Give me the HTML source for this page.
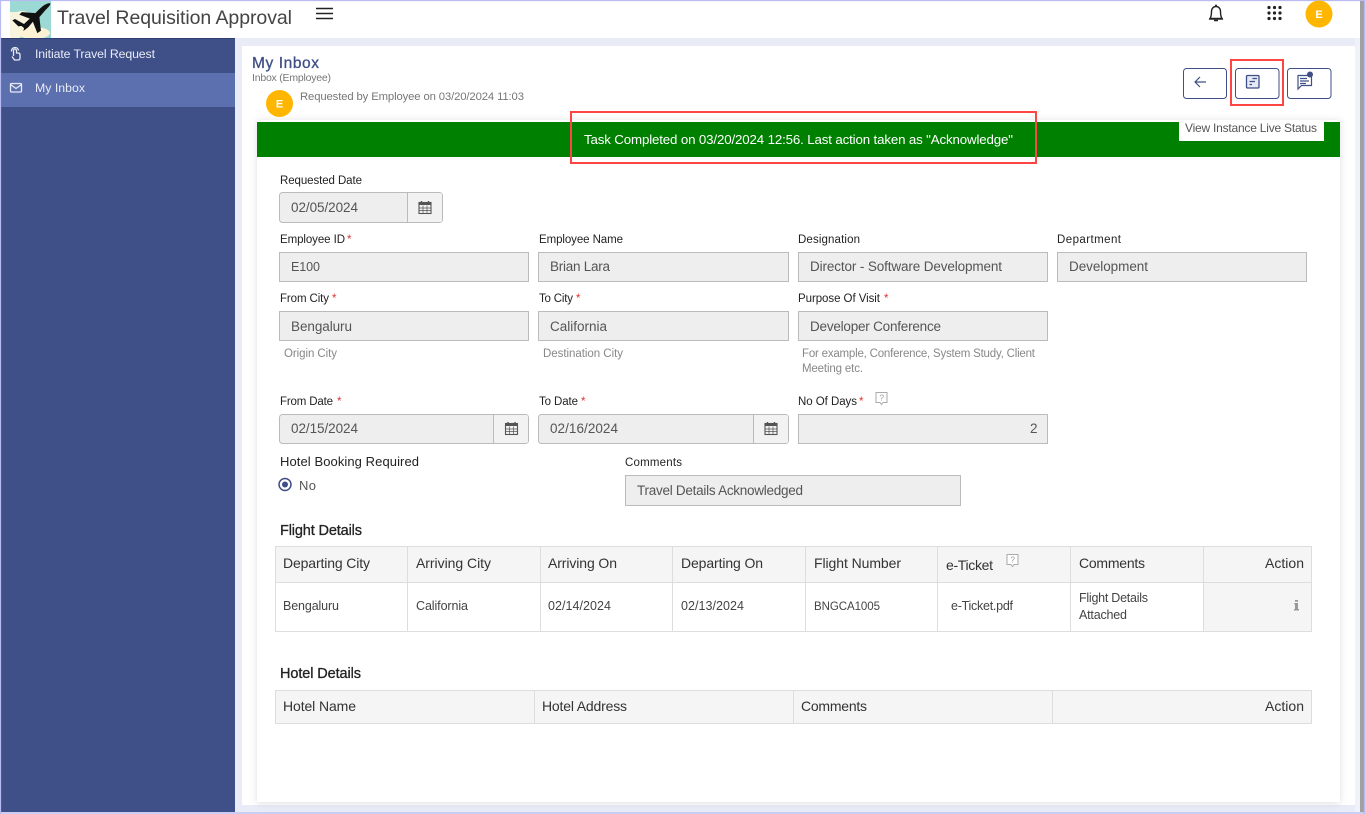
<!DOCTYPE html>
<html lang="en"><head><meta charset="utf-8"><title>Travel Requisition Approval</title>
<style>
html,body{margin:0;padding:0;width:1365px;height:814px;overflow:hidden;background:#fff}
svg{display:block}
text{font-family:"Liberation Sans",sans-serif;font-size:12px;fill:#444}
.lb text,text.lb{font-size:11.5px;fill:#222}
.st{font-size:11.5px;fill:#d33}
.v text{font-size:13.5px;fill:#555}
.h text{font-size:11.5px;fill:#888}
.th text{font-size:14px;fill:#333}
.td text{font-size:12.5px;fill:#444}
.f{fill:#eee;stroke:#bbb}
.ln{stroke:#ddd;fill:none}
.ic{fill:none;stroke:#3f4f87;stroke-width:1.2}
.sec{font-size:14.5px;fill:#222;stroke:#222;stroke-width:.3}
</style></head><body>
<svg width="1365" height="814" viewBox="0 0 1365 814" xmlns="http://www.w3.org/2000/svg">
<defs>
<filter id="sh" x="-3%" y="-3%" width="106%" height="106%"><feDropShadow dx="0" dy="1" stdDeviation="4" flood-color="#000" flood-opacity=".13"/></filter>
<clipPath id="logoclip"><rect x="10" y="1" width="41" height="37"/></clipPath>
<g id="cal"><rect x="-6" y="-5" width="12" height="11" fill="none" stroke="#555" stroke-width="1.1"/><path d="M-6-2.500H6V-5H-6Z" fill="#555"/><path d="M-3.500-6.500V-4M3.500-6.500V-4" stroke="#555" stroke-width="1.400"/><path d="M-2-2V6M2-2V6M-6 0.500H6M-6 3H6" stroke="#555" stroke-width=".7"/></g>
<g id="q"><path d="M-5.500-6H5.500V4H1.500L0 6-1.500 4H-5.500Z" fill="#fff" stroke="#aaa"/><text x="-2" y="2" style="font-size:8px;fill:#999">?</text></g>
</defs>

<!-- page background -->
<rect width="1365" height="814" fill="#e9ecf6"/>
<rect x="0" y="0" width="1365" height="38" fill="#fff"/>
<rect x="242" y="46" width="1113" height="759" fill="#fff"/>
<rect x="1355" y="38" width="5" height="774" fill="#f0f2f9"/>
<rect x="1360" y="1" width="4" height="811" fill="#a0a0a0"/>
<rect x="1" y="38" width="234" height="774" fill="#3f4f87"/>
<rect x="1" y="38" width="234" height="1" fill="#2f3d70"/>
<rect x="1" y="73" width="234" height="34" fill="#5c6fae"/>
<path d="M0 .5H1365M.5 0V814M0 813H1365M1364.500 0V814" stroke="#b7bbf2" fill="none" stroke-width="1.200"/>

<!-- logo -->
<g clip-path="url(#logoclip)">
<rect x="10" y="1" width="41" height="37" fill="#9cd9d4"/>
<ellipse cx="22" cy="24" rx="13" ry="13" fill="#f7f3dc"/>
<ellipse cx="34" cy="33" rx="16" ry="6" fill="#fdf3d4"/>
<rect x="10" y="12" width="10" height="26" fill="#f7f3dc"/>
<path d="M50 3.500C47 3.500 43 6 39 10L35.500 13.500 22 12.500 20 14.500 30.500 18.500 24 24.500 15 19.500 13 20.500 18.500 26 21.500 25.500 24.500 28 24 30 28 27 33 21 37.500 32.500 40.500 30.500 39 17 45 10C48 7 50 5.500 50 3.500Z" fill="#111" stroke="#111" stroke-width=".8"/>
</g>
<text x="57" y="24" textLength="235" style="font-size:19.500px;fill:#444">Travel Requisition Approval</text>
<path d="M316 8.500H333M316 13.500H333M316 18.500H333" stroke="#222" stroke-width="1.500"/>

<!-- header icons -->
<path d="M1210 18.500C1211 17 1211.500 15 1211.500 11.500C1211.500 8.500 1213.500 6.500 1216 6.500S1220.500 8.500 1220.500 11.500C1220.500 15 1221 17 1222 18.500ZM1209 19H1223" fill="none" stroke="#222" stroke-width="1.400"/><path d="M1214 20.500H1218" stroke="#222" stroke-width="1.500"/><circle cx="1216" cy="5.500" r="1" fill="#222"/>
<g fill="#222"><circle cx="1269" cy="7.500" r="1.600"/><circle cx="1274.500" cy="7.500" r="1.600"/><circle cx="1280" cy="7.500" r="1.600"/><circle cx="1269" cy="13" r="1.600"/><circle cx="1274.500" cy="13" r="1.600"/><circle cx="1280" cy="13" r="1.600"/><circle cx="1269" cy="18.500" r="1.600"/><circle cx="1274.500" cy="18.500" r="1.600"/><circle cx="1280" cy="18.500" r="1.600"/></g>
<circle cx="1319" cy="14" r="13.500" fill="#ffb600"/><text x="1319" y="18" text-anchor="middle" style="font-size:11px;font-weight:bold;fill:#fff">E</text>

<!-- sidebar -->
<g fill="none" stroke="#e8ebf6" stroke-width="1.300"><path d="M13.500 56V50.500A1.500 1.500 0 0 1 16.500 50.500V53H18.500C19.500 53 20 54 20 55V58C20 59.500 19 60 18 60H14.500L12 56.500"/><path d="M11.500 51.500A3.500 3.500 0 0 1 15 47.500A3.500 3.500 0 0 1 18.500 50.500"/></g>
<rect x="10.500" y="83.500" width="11" height="8.500" rx="1" fill="none" stroke="#e8ebf6" stroke-width="1.300"/><path d="M10.500 84.500L16 88.500 21.500 84.500" fill="none" stroke="#e8ebf6" stroke-width="1.200"/>
<text x="35" y="58" textLength="120" style="font-size:12.300px;fill:#e8ebf6">Initiate Travel Request</text>
<text x="35" y="92" textLength="50" style="font-size:12.300px;fill:#e8ebf6">My Inbox</text>

<!-- panel -->
<rect x="257" y="120" width="1083" height="682" fill="#fff" filter="url(#sh)"/>
<text x="252" y="68" textLength="67" style="font-size:15.500px;fill:#3f4f87;stroke:#3f4f87;stroke-width:.3">My Inbox</text>
<text x="252" y="81" textLength="79" style="font-size:10.500px;fill:#777">Inbox (Employee)</text>
<circle cx="279.500" cy="103.500" r="13.500" fill="#ffb600"/><text x="279.500" y="107.500" text-anchor="middle" style="font-size:11px;font-weight:bold;fill:#fff">E</text>
<text x="300" y="100" textLength="224" style="font-size:11.300px;fill:#777">Requested by Employee on 03/20/2024 11:03</text>

<!-- top buttons -->
<g fill="#fff" stroke="#3f4f87" stroke-width="1"><rect x="1183.500" y="68.500" width="43" height="30" rx="3"/><rect x="1235.500" y="68.500" width="43.500" height="30" rx="3"/><rect x="1287.500" y="68.500" width="43.500" height="30" rx="3"/></g>
<path d="M1206 82H1195.500M1200 77L1195 82 1200 87" class="ic"/>
<rect x="1246.500" y="75.500" width="12.500" height="12.500" rx="1" fill="#e6eaf6" stroke="#3f4f87" stroke-width="1.300"/><path d="M1252.500 78.500H1257M1249.500 81.500H1255M1249.500 84.500H1252" class="ic"/>
<path d="M1297.500 75.500H1311.500V85.500H1301.500L1298 89V75.500Z" class="ic"/><path d="M1300 78.500H1307M1300 81H1309M1300 83.500H1306" class="ic"/><circle cx="1310" cy="74.500" r="3" fill="#3f4f87"/>
<rect x="1231" y="60" width="52" height="45" fill="none" stroke="#f44" stroke-width="2"/>

<!-- banner -->
<rect x="257" y="122" width="1083" height="35" fill="#008000"/>
<text x="584" y="144" textLength="429" style="font-size:13.300px;fill:#fff">Task Completed on 03/20/2024 12:56. Last action taken as "Acknowledge"</text>
<rect x="571" y="112" width="465" height="51" fill="none" stroke="#f44" stroke-width="2"/>
<rect x="1179" y="122" width="145" height="19" fill="#fff"/>
<text x="1185" y="132" textLength="132" style="font-size:12px;fill:#555">View Instance Live Status</text>

<!-- form boxes -->
<g class="f">
<rect x="279.500" y="192.500" width="163" height="30" rx="3"/>
<rect x="279.500" y="252.500" width="249" height="29"/><rect x="538.500" y="252.500" width="250" height="29"/><rect x="798.500" y="252.500" width="249" height="29"/><rect x="1057.500" y="252.500" width="249" height="29"/>
<rect x="279.500" y="311.500" width="249" height="29"/><rect x="538.500" y="311.500" width="250" height="29"/><rect x="798.500" y="311.500" width="249" height="29"/>
<rect x="279.500" y="414.500" width="249" height="29" rx="3"/><rect x="538.500" y="414.500" width="250" height="29" rx="3"/><rect x="798.500" y="414.500" width="249" height="29"/>
<rect x="625.500" y="475.500" width="335" height="30"/>
</g>
<path d="M407.500 193V222M493.500 415V443M753.500 415V443" stroke="#bbb"/>
<rect x="408" y="193" width="34" height="29" rx="2" fill="#f2f2f2"/><rect x="494" y="415" width="34" height="28" rx="2" fill="#f2f2f2"/><rect x="754" y="415" width="34" height="28" rx="2" fill="#f2f2f2"/>
<use href="#cal" x="425" y="207.500"/><use href="#cal" x="511.500" y="428.500"/><use href="#cal" x="771" y="428.500"/>

<!-- labels -->
<g class="lb">
<text x="280" y="184" textLength="82">Requested Date</text>
<text x="280" y="243" textLength="65">Employee ID</text><text x="539" y="243" textLength="84">Employee Name</text><text x="798" y="243" textLength="62">Designation</text><text x="1057" y="243" textLength="64">Department</text>
<text x="280" y="302" textLength="49">From City</text><text x="539" y="302" textLength="34">To City</text><text x="798" y="302" textLength="82">Purpose Of Visit</text>
<text x="280" y="405" textLength="53">From Date</text><text x="539" y="405" textLength="39">To Date</text><text x="798" y="405" textLength="59">No Of Days</text>
<text x="625" y="466" textLength="57">Comments</text>
</g>
<text class="st" x="347" y="243">*</text><text class="st" x="332" y="302">*</text><text class="st" x="576" y="302">*</text><text class="st" x="884" y="302">*</text><text class="st" x="337" y="405">*</text><text class="st" x="581" y="405">*</text><text class="st" x="859" y="405">*</text>
<use href="#q" x="881.500" y="398.500"/>

<!-- values -->
<g class="v">
<text x="291" y="212" textLength="67">02/05/2024</text>
<text x="291" y="271" textLength="29" style="font-size:12.500px">E100</text><text x="550" y="271" textLength="60">Brian Lara</text><text x="810" y="271" textLength="192">Director - Software Development</text><text x="1069" y="271" textLength="79">Development</text>
<text x="291" y="331" textLength="61">Bengaluru</text><text x="550" y="331" textLength="57">California</text><text x="810" y="331" textLength="131">Developer Conference</text>
<text x="291" y="433" textLength="67">02/15/2024</text><text x="550" y="433" textLength="68">02/16/2024</text><text x="1030" y="433">2</text>
<text x="637" y="495" textLength="166">Travel Details Acknowledged</text>
</g>
<g class="h">
<text x="284" y="357" textLength="53">Origin City</text><text x="543" y="357" textLength="80">Destination City</text>
<text x="802" y="357" textLength="233">For example, Conference, System Study, Client</text><text x="802" y="372" textLength="61">Meeting etc.</text>
</g>

<!-- radio -->
<text x="280" y="466" textLength="139" style="font-size:13px;fill:#222">Hotel Booking Required</text>
<circle cx="285" cy="484.500" r="6" fill="#fff" stroke="#3f4f87" stroke-width="1.500"/><circle cx="285" cy="484.500" r="3" fill="#3f4f87"/>
<text x="299" y="490" textLength="17" style="font-size:13px;fill:#555">No</text>

<!-- flight table -->
<text class="sec" x="280" y="535" textLength="82">Flight Details</text>
<rect x="275.500" y="546.500" width="1036" height="36" fill="#f5f5f5"/>
<rect x="1203.500" y="582.500" width="108" height="49" fill="#f5f5f5"/>
<path class="ln" d="M275.500 546.500H1311.500V631.500H275.500ZM275.500 582.500H1311.500M407.500 546.500V631.500M540.500 546.500V631.500M672.500 546.500V631.500M805.500 546.500V631.500M937.500 546.500V631.500M1070.500 546.500V631.500M1203.500 546.500V631.500"/>
<g class="th">
<text x="283" y="568" textLength="87">Departing City</text><text x="416" y="568" textLength="75">Arriving City</text><text x="548" y="568" textLength="69">Arriving On</text><text x="681" y="568" textLength="82">Departing On</text><text x="814" y="568" textLength="87">Flight Number</text><text x="946" y="570" textLength="47">e-Ticket</text><text x="1079" y="568" textLength="66">Comments</text><text x="1265" y="568" textLength="39">Action</text>
</g>
<use href="#q" x="1012.500" y="560.500"/>
<g class="td">
<text x="283" y="610" textLength="56">Bengaluru</text><text x="416" y="610" textLength="52">California</text><text x="548" y="610" textLength="63">02/14/2024</text><text x="681" y="610" textLength="63">02/13/2024</text><text x="814" y="610" textLength="66" style="font-size:11.500px">BNGCA1005</text><text x="951" y="610" textLength="62">e-Ticket.pdf</text><text x="1079" y="602" textLength="69">Flight Details</text><text x="1079" y="619" textLength="48">Attached</text>
</g>
<path d="M1295 600H1298V601.700H1295ZM1294.300 603H1298V609H1299V610.500H1294V609H1295V604.500H1294.300Z" fill="#999"/>

<!-- hotel table -->
<text class="sec" x="280" y="678" textLength="81">Hotel Details</text>
<rect x="275.500" y="690.500" width="1036" height="33" fill="#f5f5f5"/>
<path class="ln" d="M275.500 690.500H1311.500V723.500H275.500ZM534.500 690.500V723.500M793.500 690.500V723.500M1052.500 690.500V723.500"/>
<g class="th">
<text x="283" y="711" textLength="73">Hotel Name</text><text x="542" y="711" textLength="85">Hotel Address</text><text x="801" y="711" textLength="66">Comments</text><text x="1265" y="711" textLength="39">Action</text>
</g>
</svg>
</body></html>
